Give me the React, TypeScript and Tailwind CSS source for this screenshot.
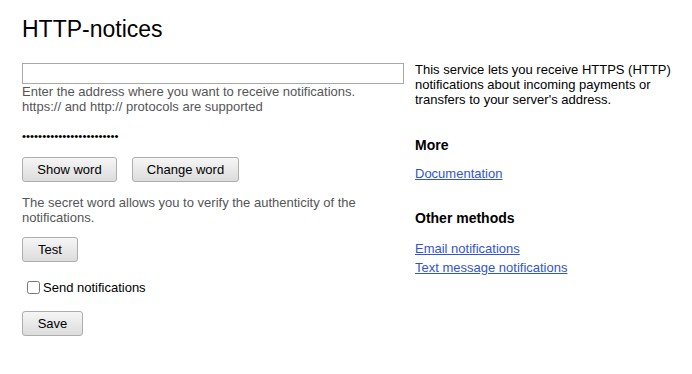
import React from "react";

const btn =
  "h-[25px] rounded-[3px] border border-[#adadad] bg-gradient-to-b from-[#f6f6f6] to-[#dcdcdc] text-[13px] leading-none text-black";

export default function App() {
  return (
    <div className="min-h-[374px] w-[692px] bg-white pl-[22px] pt-[16px] font-['Liberation_Sans',Arial,sans-serif] text-black">
      <h1 className="text-[23px] leading-[26px] font-normal">HTTP-notices</h1>

      <div className="mt-[21px] flex gap-[11px]">
        {/* left column */}
        <div className="flex w-[382px] shrink-0 flex-col items-start">
          <input
            type="text"
            className="h-[21px] w-[382px] border border-[#a9a9a9] bg-white px-1 text-[13px] outline-none"
          />
          <p className="text-[13px] leading-[15px] text-[#555]">
            Enter the address where you want to receive notifications.
            <br />
            https:// and http:// protocols are supported
          </p>

          <div className="mt-[16px] h-[12px] text-[11.5px] leading-[12px]">
            {"•".repeat(24)}
          </div>

          <div className="mt-[15px] flex gap-[15px]">
            <button className={`${btn} w-[95px]`}>Show word</button>
            <button className={`${btn} w-[107px]`}>Change word</button>
          </div>

          <p className="mt-[13px] text-[13px] leading-[15px] text-[#555]">
            The secret word allows you to verify the authenticity of the notifications.
          </p>

          <button className={`${btn} mt-[12px] w-[56px]`}>Test</button>

          <label className="mt-[18px] ml-[5px] flex items-center gap-[3px] text-[13px] leading-[15px]">
            <input type="checkbox" className="m-0 h-[13px] w-[13px]" />
            <span>Send notifications</span>
          </label>

          <button className={`${btn} mt-[16px] w-[61px]`}>Save</button>
        </div>

        {/* right column */}
        <div className="w-[272px] shrink-0 text-[13px] leading-[15px]">
          <p className="-mt-px">
            This service lets you receive HTTPS (HTTP) notifications about incoming payments or
            transfers to your server's address.
          </p>

          <h2 className="mt-[30px] text-[14px] leading-[16px] font-bold">More</h2>
          <a href="#" className="mt-[13px] block text-[#3355cc] underline">
            Documentation
          </a>

          <h2 className="mt-[29px] text-[14px] leading-[16px] font-bold">Other methods</h2>
          <a href="#" className="mt-[15px] block text-[#3355cc] underline">
            Email notifications
          </a>
          <a href="#" className="mt-[4px] block text-[#3355cc] underline">
            Text message notifications
          </a>
        </div>
      </div>
    </div>
  );
}
